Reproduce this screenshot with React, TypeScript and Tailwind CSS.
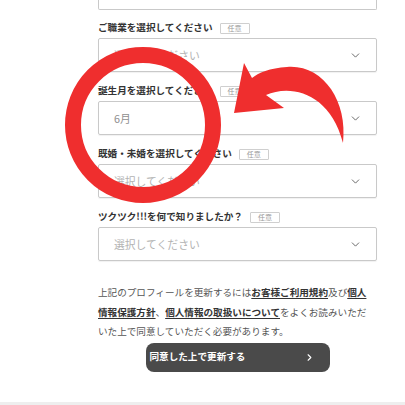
import React from 'react';
import { ChevronDown, ChevronRight } from 'lucide-react';

interface FieldProps {
  label: string;
  value: string;
  filled?: boolean;
}

const Field: React.FC<FieldProps> = ({ label, value, filled }) => (
  <div className="flex flex-col">
    <div className="flex items-center h-[16px] mb-[2px]">
      <span className="text-[9.6px] font-bold text-[#333333] leading-none">{label}</span>
      <span className="ml-[7px] h-[11px] px-[7px] flex items-center border border-[#cfcfcf] rounded-[1px] text-[7px] text-[#999999] leading-none">
        任意
      </span>
    </div>
    <div className="h-[34px] flex items-center justify-between border border-[#c9c9c9] rounded-[2px] pl-[15px] pr-[14px] shadow-[0_1px_1px_rgba(0,0,0,0.06)]">
      <span className={`text-[10.8px] leading-none ${filled ? 'text-[#8f8f8f]' : 'text-[#b3b3b3]'}`}>{value}</span>
      <ChevronDown size={13} strokeWidth={1.6} className="text-[#555555]" />
    </div>
  </div>
);

const App: React.FC = () => {
  return (
    <div className="relative w-[405px] h-[405px] bg-white overflow-hidden font-['Noto_Sans_CJK_JP','Noto_Sans',sans-serif]">
      <div className="flex flex-col h-full">
        <div className="pl-[98px] pr-[28px] flex flex-col">
          <div className="h-[10px] border border-t-0 border-[#c9c9c9] rounded-b-[2px]" />

          <div className="flex flex-col gap-[11px] mt-[10px]">
            <Field label="ご職業を選択してください" value="選択してください" />
            <Field label="誕生月を選択してください" value="6月" filled />
            <Field label="既婚・未婚を選択してください" value="選択してください" />
            <Field label="ツクツク!!!を何で知りましたか？" value="選択してください" />
          </div>

          <p className="mt-[22px] text-[9.6px] leading-[19.5px] text-[#555555] whitespace-nowrap">
            上記のプロフィールを更新するには
            <a className="font-bold text-[#333333] underline underline-offset-2">お客様ご利用規約</a>
            及び
            <a className="font-bold text-[#333333] underline underline-offset-2">個人</a>
            <br />
            <a className="font-bold text-[#333333] underline underline-offset-2">情報保護方針</a>
            、
            <a className="font-bold text-[#333333] underline underline-offset-2">個人情報の取扱いについて</a>
            をよくお読みいただ
            <br />
            いた上で同意していただく必要があります。
          </p>

          <div className="flex justify-center mt-[1px]">
            <button className="w-[184px] h-[29px] rounded-[8px] bg-[#4a4a4a] flex items-center justify-between pl-[4px] pr-[15px]">
              <span className="text-[9.6px] font-bold text-white leading-none">同意した上で更新する</span>
              <ChevronRight size={11} strokeWidth={2.4} className="text-white" />
            </button>
          </div>
        </div>

        <div className="mt-auto h-[3px] bg-[#eeeeee]" />
      </div>

      <svg className="absolute inset-0 pointer-events-none" width="405" height="405" viewBox="0 0 405 405">
        <circle cx="143" cy="125" r="70" fill="none" stroke="#ef2e2e" strokeWidth="16" />
        <path
          d="M343 143 C348 100 322 64 287 67 C270 68 258 73 252 78 L244 63 L234 113 L284 108 L266 95 C290 84 330 92 343 143 Z"
          fill="#ef2e2e"
        />
      </svg>
    </div>
  );
};

export default App;
